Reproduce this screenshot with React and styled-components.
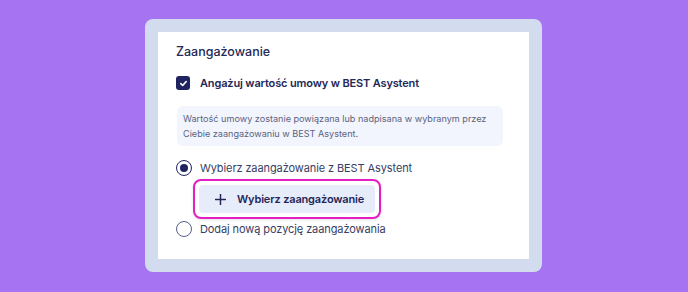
import React from "react";
import styled, { createGlobalStyle } from "styled-components";

const Global = createGlobalStyle`
  html, body { margin: 0; padding: 0; }
  body {
    background: #a673f3;
    font-family: "Inter", "Noto Sans", sans-serif;
    width: 688px;
    height: 292px;
    overflow: hidden;
  }
`;

const Page = styled.div`
  padding: 19px 0 0 145px;
`;

const Frame = styled.div`
  width: 397px;
  height: 253px;
  box-sizing: border-box;
  background: #d3dcee;
  border-radius: 8px;
  padding: 13px;
  display: flex;
`;

const Panel = styled.div`
  flex: 1;
  background: #ffffff;
  padding: 10px 26px 0 18px;
  display: flex;
  flex-direction: column;
`;

const Title = styled.div`
  font-size: 12.5px;
  line-height: 20px;
  font-weight: 500;
  color: #252958;
`;

const Row = styled.div`
  display: flex;
  align-items: center;
  height: 20px;
  margin-top: ${(p) => p.$mt || 0}px;
`;

const Box = styled.span`
  width: 14px;
  height: 14px;
  border-radius: 3px;
  background: #1f2360;
  display: flex;
  align-items: center;
  justify-content: center;
  margin-right: 10px;
`;

const Radio = styled.span`
  width: 16px;
  height: 16px;
  box-sizing: border-box;
  border-radius: 50%;
  border: 1.5px solid ${(p) => (p.$checked ? "#1f2360" : "#55608a")};
  display: flex;
  align-items: center;
  justify-content: center;
  margin-right: 8px;
  &::after {
    content: "";
    display: ${(p) => (p.$checked ? "block" : "none")};
    width: 8px;
    height: 8px;
    border-radius: 50%;
    background: #1f2360;
  }
`;

const Label = styled.span`
  font-size: 11px;
  white-space: nowrap;
  color: ${(p) => (p.$bold ? "#242857" : "#383d63")};
  font-weight: ${(p) => (p.$bold ? 600 : 400)};
  letter-spacing: ${(p) => (p.$bold ? "-0.15px" : "-0.1px")};
`;

const Info = styled.div`
  margin: 13px 0 0 1px;
  background: #f2f5fd;
  border-radius: 6px;
  padding: 5px 6px 5px 6px;
  font-size: 9.1px;
  line-height: 15px;
  color: #5b6380;
  white-space: nowrap;
`;

const Ring = styled.div`
  align-self: flex-start;
  margin: 1px 0 0 17px;
  border: 2px solid #e41ec4;
  border-radius: 8px;
  padding: 4px;
  background: #fff;
  box-shadow: 0 1px 3px rgba(60, 60, 90, 0.15);
`;

const Button = styled.button`
  width: 176px;
  height: 28px;
  border: none;
  border-radius: 4px;
  background: #e7ecfa;
  display: flex;
  align-items: center;
  padding: 0 0 0 16px;
  gap: 11px;
  white-space: nowrap;
  font-family: inherit;
  font-size: 11px;
  font-weight: 600;
  color: #232757;
  letter-spacing: -0.15px;
  cursor: pointer;
`;

export default function App() {
  return (
    <>
      <Global />
      <Page>
        <Frame>
          <Panel>
            <Title>Zaangażowanie</Title>
            <Row $mt={11}>
              <Box>
                <svg width="9" height="9" viewBox="0 0 10 10">
                  <path d="M2 5.2 L4.1 7.2 L8 2.8" fill="none" stroke="#fff" strokeWidth="1.8" strokeLinecap="round" strokeLinejoin="round" />
                </svg>
              </Box>
              <Label $bold>Angażuj wartość umowy w BEST Asystent</Label>
            </Row>
            <Info>
              Wartość umowy zostanie powiązana lub nadpisana w wybranym przez
              <br />
              Ciebie zaangażowaniu w BEST Asystent.
            </Info>
            <Row $mt={12}>
              <Radio $checked />
              <Label>Wybierz zaangażowanie z BEST Asystent</Label>
            </Row>
            <Ring>
              <Button>
                <svg width="11" height="11" viewBox="0 0 12 12">
                  <path d="M6 0.5 V11.5 M0.5 6 H11.5" stroke="#232757" strokeWidth="1.6" strokeLinecap="round" />
                </svg>
                Wybierz zaangażowanie
              </Button>
            </Ring>
            <Row>
              <Radio />
              <Label>Dodaj nową pozycję zaangażowania</Label>
            </Row>
          </Panel>
        </Frame>
      </Page>
    </>
  );
}
